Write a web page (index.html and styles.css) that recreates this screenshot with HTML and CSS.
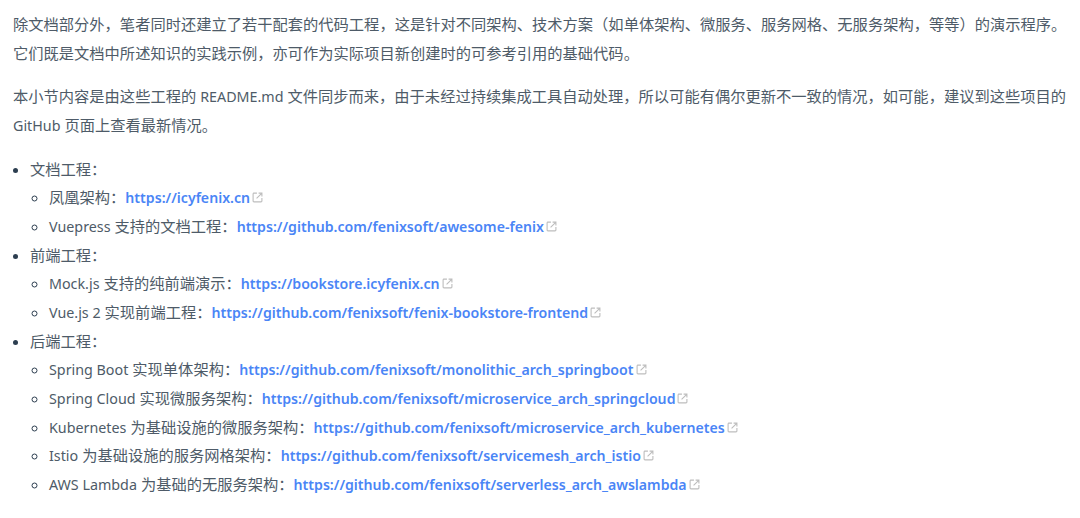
FILE: index.html
```html
<!DOCTYPE html>
<html lang="zh">
<head>
<meta charset="utf-8">
<title>工程</title>
<link rel="stylesheet" href="styles.css">
</head>
<body>
<svg class="defs" width="0" height="0"><symbol id="ext" viewBox="0 0 100 100"><path d="M18 5c-7 0-13 6-13 13v64c0 7 6 13 13 13h64c7 0 13-6 13-13V55h-10v27c0 2-1 3-3 3H18c-2 0-3-1-3-3V18c0-2 1-3 3-3h27V5z"/><path d="M60 5v10h18L38 55l7 7 40-40v18h10V5z"/></symbol></svg>
<main class="content">
<p>除文档部分外，笔者同时还建立了若干配套的代码工程，这是针对不同架构、技术方案（如单体架构、微服务、服务网格、无服务架构，等等）的演示程序。它们既是文档中所述知识的实践示例，亦可作为实际项目新创建时的可参考引用的基础代码。</p>
<p>本小节内容是由这些工程的 <span class="lat">README.md</span> 文件同步而来，由于未经过持续集成工具自动处理，所以可能有偶尔更新不一致的情况，如可能，建议到这些项目的 <span class="lat">GitHub</span> 页面上查看最新情况。</p>
<ul class="top">
<li>文档工程：
<ul>
<li>凤凰架构：<a href="#">https://icyfenix.cn<svg class="icon"><use href="#ext"/></svg></a></li>
<li><span class="lat">Vuepress</span> 支持的文档工程：<a href="#">https://github.com/fenixsoft/awesome-fenix<svg class="icon"><use href="#ext"/></svg></a></li>
</ul></li>
<li>前端工程：
<ul>
<li><span class="lat">Mock.js</span> 支持的纯前端演示：<a href="#">https://bookstore.icyfenix.cn<svg class="icon"><use href="#ext"/></svg></a></li>
<li><span class="lat">Vue.js 2</span> 实现前端工程：<a href="#">https://github.com/fenixsoft/fenix-bookstore-frontend<svg class="icon"><use href="#ext"/></svg></a></li>
</ul></li>
<li>后端工程：
<ul>
<li><span class="lat">Spring Boot</span> 实现单体架构：<a href="#">https://github.com/fenixsoft/monolithic_arch_springboot<svg class="icon"><use href="#ext"/></svg></a></li>
<li><span class="lat">Spring Cloud</span> 实现微服务架构：<a href="#">https://github.com/fenixsoft/microservice_arch_springcloud<svg class="icon"><use href="#ext"/></svg></a></li>
<li><span class="lat">Kubernetes</span> 为基础设施的微服务架构：<a href="#">https://github.com/fenixsoft/microservice_arch_kubernetes<svg class="icon"><use href="#ext"/></svg></a></li>
<li><span class="lat">Istio</span> 为基础设施的服务网格架构：<a href="#">https://github.com/fenixsoft/servicemesh_arch_istio<svg class="icon"><use href="#ext"/></svg></a></li>
<li><span class="lat">AWS Lambda</span> 为基础的无服务架构：<a href="#">https://github.com/fenixsoft/serverless_arch_awslambda<svg class="icon"><use href="#ext"/></svg></a></li>
</ul></li>
</ul>
</main>
</body>
</html>
```
FILE: styles.css
```css
html, body {
  margin: 0;
  background: #fff;
}
body {
  width: 1080px;
  height: 518px;
  overflow: hidden;
  font-family: "Noto Sans", "Noto Sans CJK SC", sans-serif;
  font-size: 15.27px;
  line-height: 28.65px;
  color: #4e5b68;
}
.defs {
  position: absolute;
}
.content {
  padding: 10px 10px 0 13px;
}
p {
  margin: 0 0 15px;
}
ul {
  margin: 0;
  padding: 0;
}
.top {
  padding-left: 17px;
}
.top ul {
  padding-left: 19px;
  list-style-type: circle;
}
li::marker {
  color: #2c3e50;
}
.lat {
  font-size: 14.3px;
  line-height: 1;
}
a {
  color: #4a85f6;
  font-size: 14.14px;
  font-weight: 600;
  line-height: 1;
  text-decoration: none;
}
.icon {
  width: 11px;
  height: 11px;
  margin-left: 2px;
  vertical-align: 0;
  fill: #bdbdbd;
}
```
